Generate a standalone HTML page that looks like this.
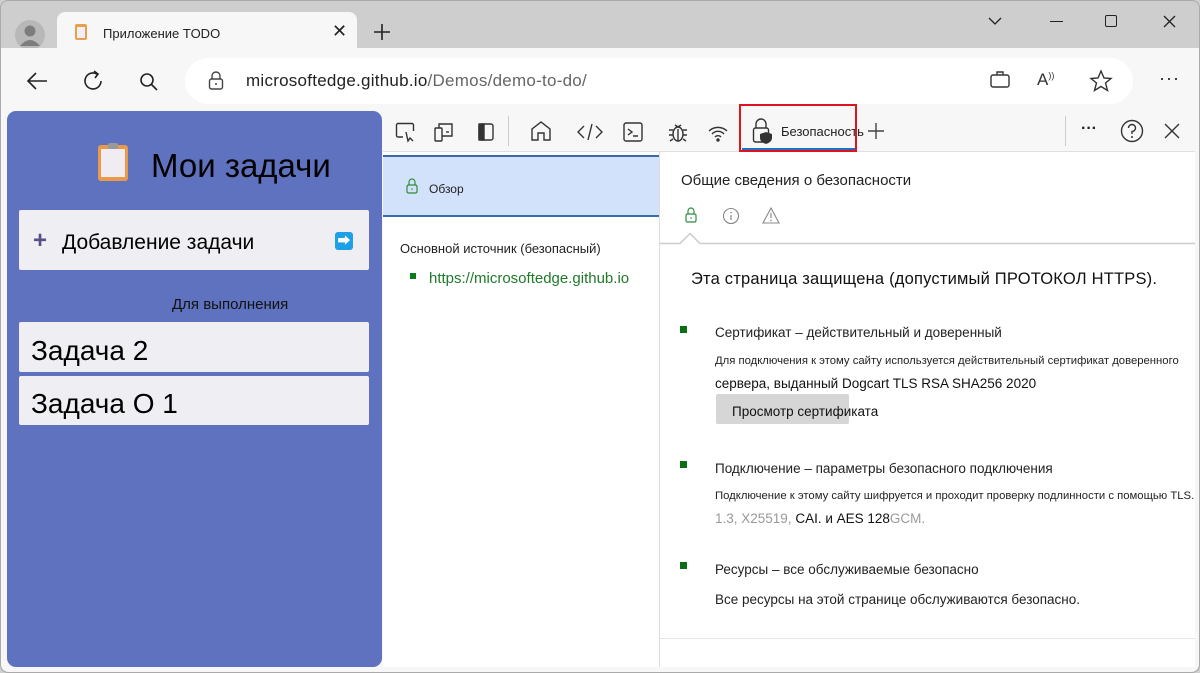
<!DOCTYPE html>
<html><head><meta charset="utf-8"><style>
*{margin:0;padding:0;box-sizing:border-box}
body{width:1200px;height:673px;overflow:hidden;background:#cfcfcf;font-family:"Liberation Sans","Noto Sans CJK SC",sans-serif;position:relative;color:#111}
.a{position:absolute;white-space:nowrap}
svg{position:absolute;overflow:visible}
</style></head><body>
<div class="a" style="left:0;top:0;width:1200px;height:673px;border:1px solid #aaa;border-radius:8px;background:#cecece"></div>
<div class="a" style="left:15px;top:20px;width:30px;height:30px;border-radius:50%;background:#b8b8b8"></div>
<svg style="left:15px;top:20px" width="30" height="30"><circle cx="15" cy="11" r="5.5" fill="#7d7d7d"/><path d="M5 26 Q15 14 25 26 Z" fill="#7d7d7d"/></svg>
<div class="a" style="left:57px;top:12px;width:300px;height:40px;background:#f7f7f7;border-radius:8px 8px 0 0"></div>
<div class="a" style="left:75px;top:24px;width:12px;height:16px;background:#e8a050;border-radius:2px"></div>
<div class="a" style="left:77px;top:27px;width:8px;height:11px;background:#f3eef5"></div>
<div class="a" style="left:103px;top:26px;font-size:13px;color:#222">Приложение TODO</div>
<div class="a" style="left:332px;top:21px;font-size:18px;color:#222">✕</div>
<svg style="left:373px;top:23px" width="18" height="18"><path d="M9 1V17M1 9H17" stroke="#222" stroke-width="1.6"/></svg>
<svg style="left:988px;top:16px" width="14" height="10"><path d="M1 2L7 8L13 2" stroke="#222" fill="none" stroke-width="1.3"/></svg>
<div class="a" style="left:1050px;top:21px;width:13px;height:1.3px;background:#222"></div>
<div class="a" style="left:1105px;top:15px;width:12px;height:12px;border:1.3px solid #222;border-radius:2px"></div>
<svg style="left:1163px;top:15px" width="13" height="13"><path d="M1 1L12 12M12 1L1 12" stroke="#222" stroke-width="1.3"/></svg>
<div class="a" style="left:1px;top:48px;width:1198px;height:624px;background:#f7f7f7;border-radius:0 0 8px 8px"></div>
<svg style="left:26px;top:71px" width="22" height="20"><path d="M21 10H2M10 2L2 10L10 18" stroke="#222" fill="none" stroke-width="1.6"/></svg>
<svg style="left:83px;top:70px" width="22" height="22"><path d="M18 11A8 8 0 1 1 14 4M11 1L15 4L12 8" stroke="#222" fill="none" stroke-width="1.6"/></svg>
<svg style="left:139px;top:72px" width="20" height="20"><circle cx="8" cy="8" r="6" stroke="#222" fill="none" stroke-width="1.6"/><path d="M12.5 12.5L18 18" stroke="#222" stroke-width="1.6"/></svg>
<div class="a" style="left:185px;top:58px;width:948px;height:46px;background:#fff;border-radius:23px"></div>
<svg style="left:208px;top:71px" width="16" height="20"><path d="M4 8V5A4 4 0 0 1 12 5V8" stroke="#444" fill="none" stroke-width="1.4"/><rect x="1.5" y="8" width="13" height="10" rx="2" stroke="#444" fill="none" stroke-width="1.4"/><circle cx="8" cy="13" r="1" fill="#444"/></svg>
<div class="a" style="left:246px;top:71px;font-size:17px;color:#222;letter-spacing:.25px">microsoftedge.github.io<span style="color:#666">/Demos/demo-to-do/</span></div>
<svg style="left:990px;top:71px" width="20" height="18"><rect x="1" y="4" width="18" height="12" rx="2" stroke="#333" fill="none" stroke-width="1.4"/><path d="M7 4V1H13V4" stroke="#333" fill="none" stroke-width="1.4"/></svg>
<div class="a" style="left:1037px;top:70px;font-size:17px;color:#333">A<sup style="font-size:9px">))</sup></div>
<svg style="left:1090px;top:70px" width="22" height="22"><path d="M11 1L14 8L21 8.5L15.5 13L17.5 20.5L11 16.5L4.5 20.5L6.5 13L1 8.5L8 8Z" stroke="#333" fill="none" stroke-width="1.4"/></svg>
<div class="a" style="left:1159px;top:68px;font-size:18px;color:#222;letter-spacing:1px">···</div>
<div class="a" style="left:7px;top:111px;width:375px;height:556px;background:#5f72c0;border-radius:9px"></div>
<div class="a" style="left:98px;top:145px;width:30px;height:36px;background:#e89a48;border-radius:3px"></div>
<div class="a" style="left:101px;top:149px;width:24px;height:28px;background:#f1ecf4"></div>
<div class="a" style="left:108px;top:143px;width:10px;height:6px;background:#999;border-radius:2px"></div>
<div class="a" style="left:151px;top:147px;font-size:33px;color:#000">Мои задачи</div>
<div class="a" style="left:19px;top:210px;width:350px;height:60px;background:#eeeef3;border-radius:2px"></div>
<div class="a" style="left:33px;top:227px;font-size:24px;color:#5a4d8a;font-weight:bold">+</div>
<div class="a" style="left:62px;top:231px;font-size:21px;color:#000">Добавление задачи</div>
<div class="a" style="left:335px;top:232px;width:18px;height:18px;background:#1da1e6;border-radius:3px;color:#fff;font-size:13px;text-align:center;line-height:18px">➡</div>
<div class="a" style="left:172px;top:296px;font-size:15px;color:#111">Для выполнения</div>
<div class="a" style="left:19px;top:322px;width:350px;height:50px;background:#eeeef3;border-radius:2px"></div>
<div class="a" style="left:31px;top:335px;font-size:28px;color:#000">Задача 2</div>
<div class="a" style="left:19px;top:376px;width:350px;height:49px;background:#eeeef3;border-radius:2px"></div>
<div class="a" style="left:31px;top:388px;font-size:28px;color:#000">Задача О 1</div>
<div class="a" style="left:383px;top:111px;width:812px;height:556px;background:#fff"></div>
<div class="a" style="left:383px;top:111px;width:812px;height:41px;background:#f7f7f7;border-bottom:1px solid #e0e0e0"></div>
<svg style="left:395px;top:122px" width="100" height="22" fill="none" stroke="#333" stroke-width="1.4">
<path d="M8 15H3A1.5 1.5 0 0 1 1.5 13.5V3A1.5 1.5 0 0 1 3 1.5H17A1.5 1.5 0 0 1 18.5 3V9"/><path d="M11 10L13 19L15 16L18 19"/>
<rect x="40" y="6" width="7" height="13" rx="1"/><path d="M44 6V2H57V14H47"/><path d="M51 10H54"/>
<rect x="84" y="2" width="14" height="16" rx="2"/><rect x="84" y="2" width="5" height="16" fill="#333"/>
</svg>
<div class="a" style="left:508px;top:116px;width:1px;height:30px;background:#ccc"></div>
<svg style="left:530px;top:120px" width="210" height="24" fill="none" stroke="#333" stroke-width="1.4">
<path d="M2 20V9L11 2L20 9V20H14V13H8V20Z"/>
<path d="M54 6L48 12L54 18M66 6L72 12L66 18M62 4L58 20"/>
<rect x="94" y="3" width="18" height="18" rx="2"/><path d="M98 9L102 12L98 15M103 16H108"/>
<ellipse cx="148" cy="14" rx="5" ry="7"/><path d="M145 5L148 7L151 5M139 10H143M153 10H157M139 15H143M153 15H157M140 21L143 19M156 21L153 19M148 9V21"/>
<path d="M179 11A13 13 0 0 1 197 11M182 14A8 8 0 0 1 194 14M185 17A4 4 0 0 1 191 17"/><circle cx="188" cy="20" r="1" fill="#333"/>
</svg>
<svg style="left:752px;top:119px" width="24" height="26"><path d="M4 9V5A5 5 0 0 1 14 5V9" stroke="#333" fill="none" stroke-width="1.4"/><rect x="1.5" y="9" width="15" height="14" rx="2" stroke="#333" fill="none" stroke-width="1.4"/><path d="M14 13L20 15V19Q20 23 14 25Q8 23 8 19V15Z" fill="#333"/></svg>
<div class="a" style="left:781px;top:124px;font-size:13px;color:#222">Безопасность</div>
<svg style="left:867px;top:122px" width="18" height="18"><path d="M9 1V17M1 9H17" stroke="#444" stroke-width="1.4"/></svg>
<div class="a" style="left:742px;top:148px;width:114px;height:3px;background:#1a73c8"></div>
<div class="a" style="left:739px;top:104px;width:118px;height:48px;border:2px solid #e0141e"></div>
<div class="a" style="left:1065px;top:116px;width:1px;height:30px;background:#ccc"></div>
<div class="a" style="left:1081px;top:120px;font-size:16px;color:#222;font-weight:bold">···</div>
<svg style="left:1120px;top:119px" width="24" height="24"><circle cx="12" cy="12" r="10.5" stroke="#333" fill="none" stroke-width="1.4"/><path d="M8.5 9A3.5 3.5 0 1 1 12 12.5V15" stroke="#333" fill="none" stroke-width="1.4"/><circle cx="12" cy="18" r="1" fill="#333"/></svg>
<svg style="left:1164px;top:123px" width="16" height="16"><path d="M1 1L15 15M15 1L1 15" stroke="#333" stroke-width="1.4"/></svg>
<div class="a" style="left:383px;top:155px;width:276px;height:62px;background:#d3e2fb;border-top:2px solid #3a6ca8;border-bottom:2px solid #3a6ca8"></div>
<svg style="left:406px;top:178px" width="12" height="16"><path d="M3 7V4A3 3 0 0 1 9 4V7" stroke="#2e8b3a" fill="none" stroke-width="1.2"/><rect x="1" y="7" width="10" height="8" rx="1.5" stroke="#2e8b3a" fill="none" stroke-width="1.2"/><circle cx="6" cy="11" r=".8" fill="#2e8b3a"/></svg>
<div class="a" style="left:429px;top:182px;font-size:12px;color:#222">Обзор</div>
<div class="a" style="left:400px;top:241px;font-size:13px;color:#222">Основной источник (безопасный)</div>
<div class="a" style="left:410px;top:273px;width:6px;height:6px;background:#0a7a1a"></div>
<div class="a" style="left:429px;top:270px;font-size:15px;color:#1f7a2a">https://microsoftedge.github.io</div>
<div class="a" style="left:659px;top:152px;width:1px;height:515px;background:#ddd"></div>
<div class="a" style="left:681px;top:172px;font-size:15px;color:#222">Общие сведения о безопасности</div>
<svg style="left:685px;top:207px" width="12" height="16"><path d="M3 7V4A3 3 0 0 1 9 4V7" stroke="#2e8b3a" fill="none" stroke-width="1.2"/><rect x="1" y="7" width="10" height="8" rx="1.5" stroke="#2e8b3a" fill="none" stroke-width="1.2"/><circle cx="6" cy="11" r=".8" fill="#2e8b3a"/></svg>
<svg style="left:722px;top:207px" width="18" height="18"><circle cx="9" cy="9" r="7.5" stroke="#888" fill="none" stroke-width="1.1"/><path d="M9 8V13" stroke="#888" stroke-width="1.2"/><circle cx="9" cy="5.5" r=".8" fill="#888"/></svg>
<svg style="left:762px;top:207px" width="18" height="17"><path d="M9 1L17 16H1Z" stroke="#888" fill="none" stroke-width="1.1"/><path d="M9 6V11" stroke="#888" stroke-width="1.2"/><circle cx="9" cy="13.5" r=".8" fill="#888"/></svg>
<svg style="left:660px;top:232px" width="535" height="14"><path d="M0 11.5H20L30 1.5L40 11.5H535" stroke="#ccc" fill="#fff" stroke-width="1.5"/></svg>
<div class="a" style="left:691px;top:270px;font-size:16.5px;color:#111;letter-spacing:.2px">Эта страница защищена (допустимый ПРОТОКОЛ HTTPS).</div>
<div class="a" style="left:680px;top:326px;width:7px;height:7px;background:#0a6e14"></div>
<div class="a" style="left:715px;top:325px;font-size:13.5px;color:#222">Сертификат – действительный и доверенный</div>
<div class="a" style="left:715px;top:355px;font-size:11.3px;color:#222">Для подключения к этому сайту используется действительный сертификат доверенного</div>
<div class="a" style="left:715px;top:376px;font-size:13.5px;color:#111">сервера, выданный Dogcart TLS RSA SHA256 2020</div>
<div class="a" style="left:716px;top:394px;width:133px;height:30px;background:#d6d6d6;border-radius:2px"></div>
<div class="a" style="left:732px;top:404px;font-size:13.5px;color:#111">Просмотр сертификата</div>
<div class="a" style="left:680px;top:461px;width:7px;height:7px;background:#0a6e14"></div>
<div class="a" style="left:715px;top:461px;font-size:13.5px;color:#222">Подключение – параметры безопасного подключения</div>
<div class="a" style="left:715px;top:490px;font-size:11.3px;color:#222">Подключение к этому сайту шифруется и проходит проверку подлинности с помощью TLS.</div>
<div class="a" style="left:715px;top:511px;font-size:13.5px;color:#999">1.3, X25519, <span style="color:#111">CAI. и AES 128</span>GCM.</div>
<div class="a" style="left:680px;top:562px;width:7px;height:7px;background:#0a6e14"></div>
<div class="a" style="left:715px;top:562px;font-size:13.5px;color:#222">Ресурсы – все обслуживаемые безопасно</div>
<div class="a" style="left:715px;top:592px;font-size:13.5px;color:#222">Все ресурсы на этой странице обслуживаются безопасно.</div>
<div class="a" style="left:660px;top:638px;width:535px;height:1px;background:#e5e5e5"></div>
</body></html>
